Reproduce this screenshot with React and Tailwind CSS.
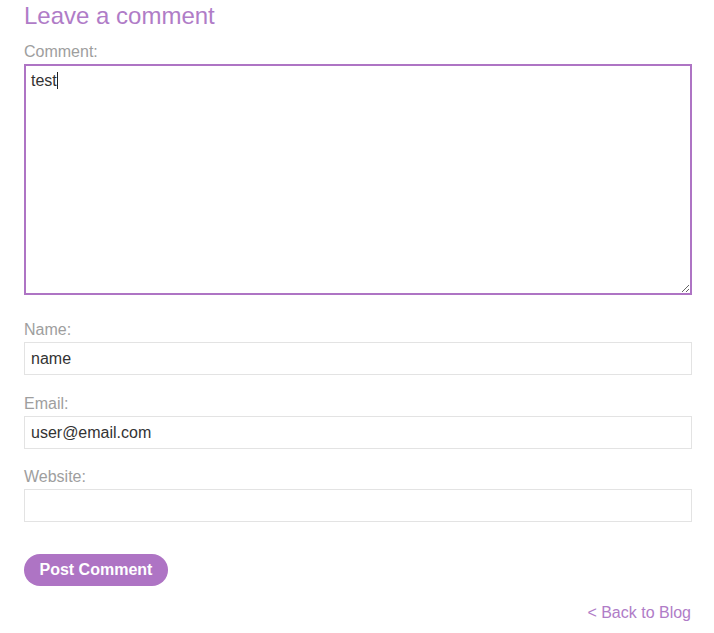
import { useState } from 'react'

const font = { fontFamily: '"Liberation Sans", Arial, sans-serif' }

function Field({ label, value, onChange, className = '' }) {
  return (
    <div className={className}>
      <label className="block text-[16px] leading-[20px] text-[#9e9e9e] mb-[2px]">{label}</label>
      <input
        type="text"
        value={value}
        onChange={(e) => onChange(e.target.value)}
        className="block w-full h-[33px] border border-[#e3e3e3] bg-white px-[6px] text-[16px] text-[#333333] outline-none"
      />
    </div>
  )
}

export default function App() {
  const [comment, setComment] = useState('test')
  const [name, setName] = useState('name')
  const [email, setEmail] = useState('user@email.com')
  const [website, setWebsite] = useState('')

  return (
    <div className="min-h-screen bg-white pl-6 pr-[22px] pt-[1px]" style={font}>
      <h2 className="text-[24px] leading-[30px] text-[#b07cc7] font-normal">Leave a comment</h2>

      <form onSubmit={(e) => e.preventDefault()}>
        <label className="block mt-[11px] mb-[2px] text-[16px] leading-[20px] text-[#9e9e9e]">Comment:</label>
        <div className="relative">
          <textarea
            value={comment}
            onChange={(e) => setComment(e.target.value)}
            className="block w-full h-[231px] border-2 border-[#ae74c4] p-[5px] text-[16px] leading-[19px] text-[#333333] outline-none resize"
          />
          {/* caret */}
          <span className="absolute left-[33px] top-[8px] h-[17px] w-[1px] bg-[#222222]" />
        </div>

        <Field label="Name:" value={name} onChange={setName} className="mt-[25px]" />
        <Field label="Email:" value={email} onChange={setEmail} className="mt-[19px]" />
        <Field label="Website:" value={website} onChange={setWebsite} className="mt-[18px]" />

        <button
          type="submit"
          className="mt-[32px] h-[32px] px-[15.5px] rounded-full bg-[#ae74c4] text-white text-[16px] font-bold leading-[32px]"
        >
          Post Comment
        </button>
      </form>

      <div className="mt-[17px] pr-[1px] text-right text-[16px] leading-[20px]">
        <a href="#" className="text-[#b07cc7]">&lt; Back to Blog</a>
      </div>
    </div>
  )
}
